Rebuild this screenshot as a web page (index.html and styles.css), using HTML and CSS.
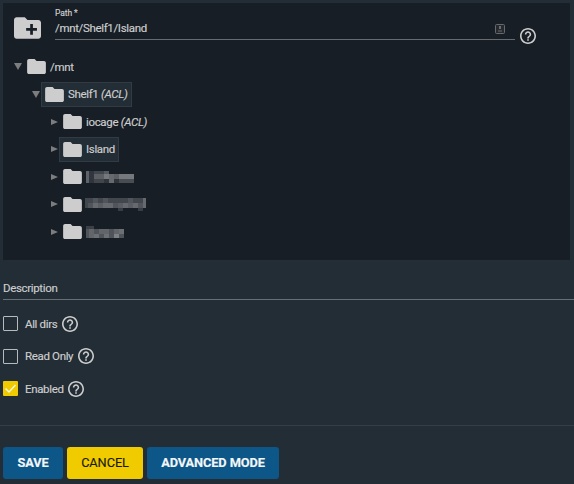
FILE: index.html
```html
<!DOCTYPE html>
<html lang="en">
<head>
<meta charset="utf-8">
<title>Share path</title>
<link rel="stylesheet" href="styles.css">
</head>
<body>
<svg width="0" height="0" class="defs">
  <symbol id="folder" viewBox="2 4 20 16"><path d="M10 4H4c-1.1 0-1.99.9-1.99 2L2 18c0 1.100.9 2 2 2h16c1.100 0 2-.9 2-2V8c0-1.100-.9-2-2-2h-8l-2-2z"/></symbol>
  <symbol id="folder-add" viewBox="2 4 20 16"><path d="M20 6h-8l-2-2H4c-1.110 0-1.990.890-1.990 2L2 18c0 1.110.890 2 2 2h16c1.110 0 2-.890 2-2V8c0-1.110-.890-2-2-2zm-1 8h-3v3h-2v-3h-3v-2h3V9h2v3h3v2z"/></symbol>
  <symbol id="help" viewBox="2 2 20 20"><path d="M11 18h2v-2h-2v2zm1-16C6.480 2 2 6.480 2 12s4.480 10 10 10 10-4.480 10-10S17.520 2 12 2zm0 18c-4.410 0-8-3.590-8-8s3.590-8 8-8 8 3.590 8 8-3.590 8-8 8zm0-14c-2.210 0-4 1.790-4 4h2c0-1.100.9-2 2-2s2 .9 2 2c0 2-3 1.750-3 5h2c0-2.250 3-2.500 3-5 0-2.210-1.790-4-4-4z"/></symbol>
</svg>
<main class="panel">
  <div class="path-row">
    <svg class="add-icon"><use href="#folder-add"/></svg>
    <div class="field">
      <div class="label">Path *</div>
      <div class="value"><span>/mnt/Shelf1/Island</span>
        <svg class="key" viewBox="0 0 10 10"><rect x=".5" y=".5" width="9" height="9" rx="1" fill="#26292e" stroke="#66696d"/><path d="M4 2h2v3H4zM3 6.500h4v1H3z" fill="#6a6d70"/></svg>
      </div>
    </div>
    <svg class="help"><use href="#help"/></svg>
  </div>
  <div class="tree">
    <div class="node l0"><i class="arrow down"></i><div class="item"><svg class="folder"><use href="#folder"/></svg><span>/mnt</span></div></div>
    <div class="node l1"><i class="arrow down"></i><div class="item active"><svg class="folder"><use href="#folder"/></svg><span>Shelf1 <em>(ACL)</em></span></div></div>
    <div class="node l2"><i class="arrow"></i><div class="item"><svg class="folder"><use href="#folder"/></svg><span>iocage <em>(ACL)</em></span></div></div>
    <div class="node l2"><i class="arrow"></i><div class="item active"><svg class="folder"><use href="#folder"/></svg><span>Island</span></div></div>
    <div class="node l2"><i class="arrow"></i><div class="item"><svg class="folder"><use href="#folder"/></svg>
      <svg class="mosaic" width="48" height="12" shape-rendering="crispEdges">
        <path fill="#5f6368" d="M0 0h3v12H0z"/><path fill="#30353c" d="M3 8h45v4H3z"/><path fill="#31363e" d="M3 0h5v8H3z"/><path fill="#41464c" d="M8 0h10v3H8zM8 8h10v4H8z"/><path fill="#565a60" d="M18 0h5v3h-5z"/><path fill="#5c6065" d="M8 3h10v5H8zM28 3h5v5h-5z"/><path fill="#75787c" d="M18 3h5v5h-5zM33 3h15v5H33z"/><path fill="#666a6f" d="M23 3h5v9h-5z"/><path fill="#484d53" d="M33 8h15v4H33z"/>
      </svg></div></div>
    <div class="node l2"><i class="arrow"></i><div class="item"><svg class="folder"><use href="#folder"/></svg>
      <svg class="mosaic wide" width="61" height="13" shape-rendering="crispEdges">
        <path fill="#42474e" d="M0 0h58v10H0z"/><path fill="#51555b" d="M8 0h5v5H8zM18 0h5v5h-5zM3 5h5v5H3zM28 5h5v5h-5zM43 0h5v5h-5zM53 5h5v5h-5z"/><path fill="#666a6f" d="M8 5h5v5H8zM18 5h10v5H18zM38 5h5v5h-5zM48 5h5v5h-5zM58 0h3v10h-3z"/><path fill="#5a5e64" d="M13 5h5v5h-5zM33 5h5v5h-5zM43 5h5v5h-5z"/><path fill="#383d44" d="M33 10h5v3h-5zM53 10h5v3h-5z"/>
      </svg></div></div>
    <div class="node l2"><i class="arrow"></i><div class="item"><svg class="folder"><use href="#folder"/></svg>
      <svg class="mosaic" width="38" height="12" shape-rendering="crispEdges">
        <path fill="#3c4148" d="M0 0h8v3H0z"/><path fill="#50545a" d="M0 3h38v9H0z"/><path fill="#62666b" d="M3 3h5v9H3zM13 3h10v5H13zM28 3h5v5h-5z"/><path fill="#6c7074" d="M8 8h5v4H8zM18 8h5v4h-5zM33 3h5v5h-5z"/><path fill="#7d8084" d="M28 8h5v4h-5z"/>
      </svg></div></div>
  </div>
</main>
<section class="desc"><span>Description</span></section>
<section class="checks">
  <div class="check"><i class="box"></i><span>All dirs</span><svg class="help"><use href="#help"/></svg></div>
  <div class="check"><i class="box"></i><span>Read Only</span><svg class="help"><use href="#help"/></svg></div>
  <div class="check"><i class="box on"><svg viewBox="0 0 15 15"><path d="M2.500 7.500l3.500 3.500 6.500-7" fill="none" stroke="#f8f6df" stroke-width="1.500"/></svg></i><span>Enabled</span><svg class="help"><use href="#help"/></svg></div>
</section>
<footer class="actions">
  <button class="btn save">SAVE</button><button class="btn cancel">CANCEL</button><button class="btn advanced">ADVANCED MODE</button>
</footer>
</body>
</html>
```
FILE: styles.css
```css
* { box-sizing: border-box; }
body { margin: 0; height: 484px; overflow: hidden; background: #232d35; color: #cdcecf; font: 11.500px/14px Roboto, sans-serif; letter-spacing: -.34px; -webkit-text-stroke: .15px; }
svg { display: block; flex: none; fill: #cdcdcd; }
.defs { position: absolute; }
.panel { margin: 3px 4px 0 3px; height: 257px; background: #181e26; }
.path-row { display: flex; height: 50.200px; padding-left: 11px; }
.add-icon { width: 27px; height: 22px; margin-top: 14px; }
.field { width: 460px; height: 37px; margin-left: 14px; border-bottom: 1px solid #676b70; }
.label { font-size: 8.500px; line-height: 10px; letter-spacing: -.1px; padding-top: 5px; height: 15px; }
.value { display: flex; justify-content: space-between; line-height: 21px; padding-right: 10px; }
.key { width: 10px; height: 10px; margin-top: 6px; }
.help { width: 16px; height: 16px; }
.path-row .help { margin: 25px 0 0 5px; }
.tree { padding-left: 11px; }
.node { display: flex; align-items: center; height: 27.450px; }
.l1 { padding-left: 18px; }
.l2 { padding-left: 36px; }
.arrow { width: 8px; margin-right: 1px; height: 9px; display: flex; align-items: center; justify-content: center; }
.arrow::before { content: ""; border-left: 7px solid #7c7d7e; border-top: 3.500px solid transparent; border-bottom: 3.500px solid transparent; }
.arrow.down::before { border: 4px solid transparent; border-top: 7px solid #7c7d7e; border-bottom: 0; }
.item { display: flex; align-items: center; height: 25px; padding: 0 3px; border: 1px solid transparent; white-space: nowrap; }
.item.active { background: #232d35; border-color: #313b43; }
.folder { width: 19px; height: 15px; margin-right: 4px; }
.mosaic.wide { margin-left: -1px; }
.desc { margin: 20px 0 0 3px; height: 20px; border-bottom: 1px solid #676f75; line-height: 17px; }
.checks { height: 126px; padding: 7.500px 0 0 3px; border-bottom: 1px solid #353e46; }
.check { display: flex; align-items: center; height: 32.600px; }
.box { width: 15px; height: 15px; margin-right: 7px; border: 1px solid #b8bbbd; border-radius: 1px; }
.box.on { background: #f0cb00; border: 0; }
.check .help { margin-left: 4.500px; }
.actions { display: flex; gap: 4px; padding: 21px 0 0 3px; }
.btn { height: 32px; padding: 0; border: 0; border-radius: 3px; background: #0d5688; color: #f3f6f8; font: bold 12.800px/32px Roboto, sans-serif; letter-spacing: -.1px; white-space: nowrap; }
.save { width: 60px; }
.cancel { width: 76px; background: #f0cb00; color: #181a10; font-weight: 400; }
.advanced { width: 132px; }
```
